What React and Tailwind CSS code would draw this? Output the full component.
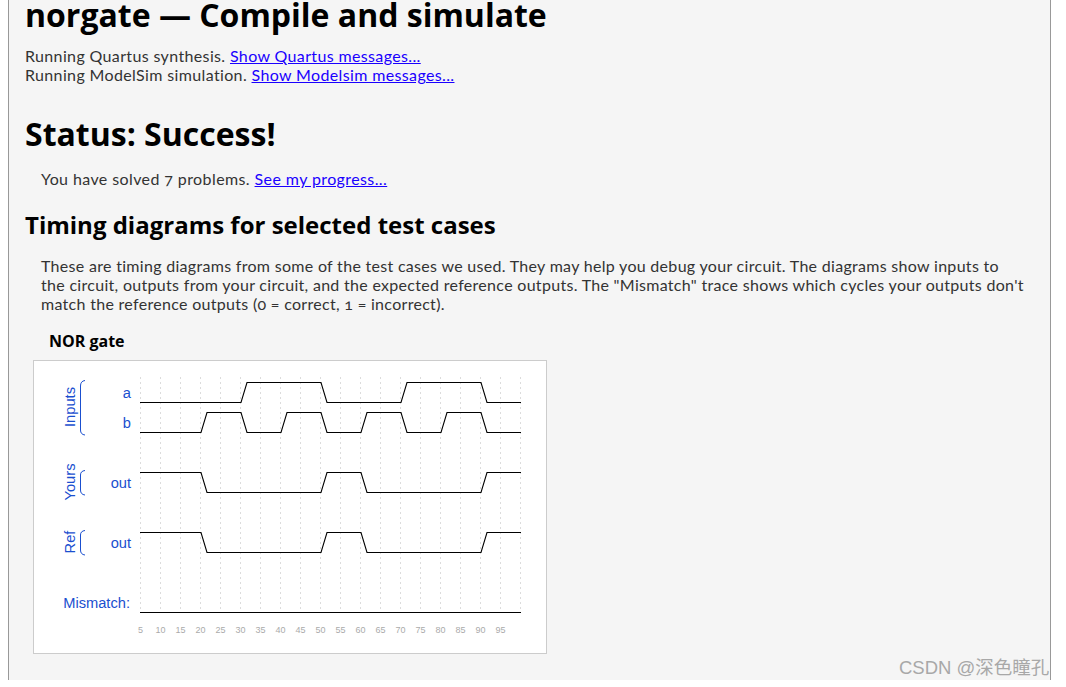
const HI = [
  { y: 382, lo: 402, edges: [[241, 1], [321, 0], [401, 1], [481, 0]], start: 0 },
  { y: 412, lo: 432, edges: [[201, 1], [241, 0], [281, 1], [321, 0], [361, 1], [401, 0], [441, 1], [481, 0]], start: 0 },
  { y: 472, lo: 492, edges: [[201, 0], [321, 1], [361, 0], [481, 1]], start: 1 },
  { y: 532, lo: 552, edges: [[201, 0], [321, 1], [361, 0], [481, 1]], start: 1 },
];

function wavePath({ y, lo, edges, start }) {
  const level = (v) => (v ? y : lo) + 0.5;
  let d = `M140 ${level(start)}`;
  let cur = start;
  for (const [x, v] of edges) {
    d += ` L${x} ${level(cur)} L${x + 6} ${level(v)}`;
    cur = v;
  }
  return d + ` L521 ${level(cur)}`;
}

function Diagram() {
  const grid = [];
  for (let x = 140; x <= 520; x += 20) grid.push(x);
  const blue = "#1a4fcf";
  return (
    <svg width="512" height="292" viewBox="34 361 512 292" className="block" style={{ fontFamily: '"Liberation Sans", Arial, sans-serif' }}>
      {grid.map((x) => (
        <line key={x} x1={x + 0.5} x2={x + 0.5} y1="377" y2="612" stroke="#dcdcdc" strokeDasharray="2 3" />
      ))}
      {HI.map((w, i) => (
        <path key={i} d={wavePath(w)} fill="none" stroke="#000" strokeWidth="1.1" />
      ))}
      <line x1="140" x2="521" y1="612.5" y2="612.5" stroke="#000" strokeWidth="1.1" />
      {["M85 380.5 Q80.5 381 80.5 386 V430 Q80.5 434.5 85 435", "M85 470.5 Q80.5 471 80.5 475 V490 Q80.5 494.5 85 495", "M85 530.5 Q80.5 531 80.5 535 V550 Q80.5 554.5 85 555"].map((d) => (
        <path key={d} d={d} fill="none" stroke={blue} strokeWidth="1" />
      ))}
      <g fill={blue} fontSize="14.67">
        <text transform="translate(75 407) rotate(-90)" textAnchor="middle">Inputs</text>
        <text transform="translate(75 482) rotate(-90)" textAnchor="middle">Yours</text>
        <text transform="translate(75 542) rotate(-90)" textAnchor="middle">Ref</text>
        <text x="131" y="398" textAnchor="end">a</text>
        <text x="131" y="428" textAnchor="end">b</text>
        <text x="131" y="488" textAnchor="end">out</text>
        <text x="131" y="548" textAnchor="end">out</text>
        <text x="130" y="608" textAnchor="end">Mismatch:</text>
      </g>
      <g fill="#aaa" fontSize="9" textAnchor="middle">
        {grid.slice(0, 19).map((x, i) => (
          <text key={x} x={x + 0.5} y="633">{(i + 1) * 5}</text>
        ))}
      </g>
    </svg>
  );
}

export default function App() {
  const body = { fontFamily: 'Lato, "Open Sans", sans-serif' };
  const head = { fontFamily: '"Open Sans", sans-serif' };
  return (
    <div className="relative h-[687px] overflow-hidden bg-white pl-2 pr-[15px]">
      <div className="h-full border-x border-[#999] bg-[#f5f5f5] pl-4 text-[16px] font-normal leading-[19px] text-[#333] oldstyle-nums" style={body}>
        <h1 className="mt-[-7px] text-[32px] font-bold leading-[44px] text-black" style={head}>norgate — Compile and simulate</h1>
        <p className="mt-[9px] tracking-[0.36px]">
          Running Quartus synthesis. <a href="#" className="text-[#1a00ff] underline">Show Quartus messages...</a>
          <br />
          Running ModelSim simulation. <a href="#" className="text-[#1a00ff] underline">Show Modelsim messages...</a>
        </p>
        <h2 className="mt-[28px] text-[32px] font-bold leading-[44px] text-black" style={head}>Status: Success!</h2>
        <p className="ml-4 mt-[13px] tracking-[0.4px]">
          You have solved 7 problems. <a href="#" className="text-[#1a00ff] underline">See my progress...</a>
        </p>
        <h3 className="mt-[20px] text-[24px] font-bold leading-[33px] text-black" style={head}>Timing diagrams for selected test cases</h3>
        <p className="ml-4 mt-[15px] whitespace-nowrap tracking-[0.3px]">
          These are timing diagrams from some of the test cases we used. They may help you debug your circuit. The diagrams show inputs to
          <br />
          the circuit, outputs from your circuit, and the expected reference outputs. The "Mismatch" trace shows which cycles your outputs don't
          <br />
          match the reference outputs (0 = correct, 1 = incorrect).
        </p>
        <h4 className="ml-6 mt-[17px] text-[16px] font-bold leading-[22px] text-black" style={head}>NOR gate</h4>
        <div className="ml-2 mt-[8px] w-[514px] border border-[#ccc] bg-white">
          <Diagram />
        </div>
      </div>
      <div className="absolute left-[899px] top-[658px] text-[18.5px] leading-[20px] text-[#a8a8a8]" style={{ fontFamily: '"Liberation Sans", "Noto Sans CJK SC", sans-serif' }}>CSDN @深色瞳孔</div>
    </div>
  );
}
